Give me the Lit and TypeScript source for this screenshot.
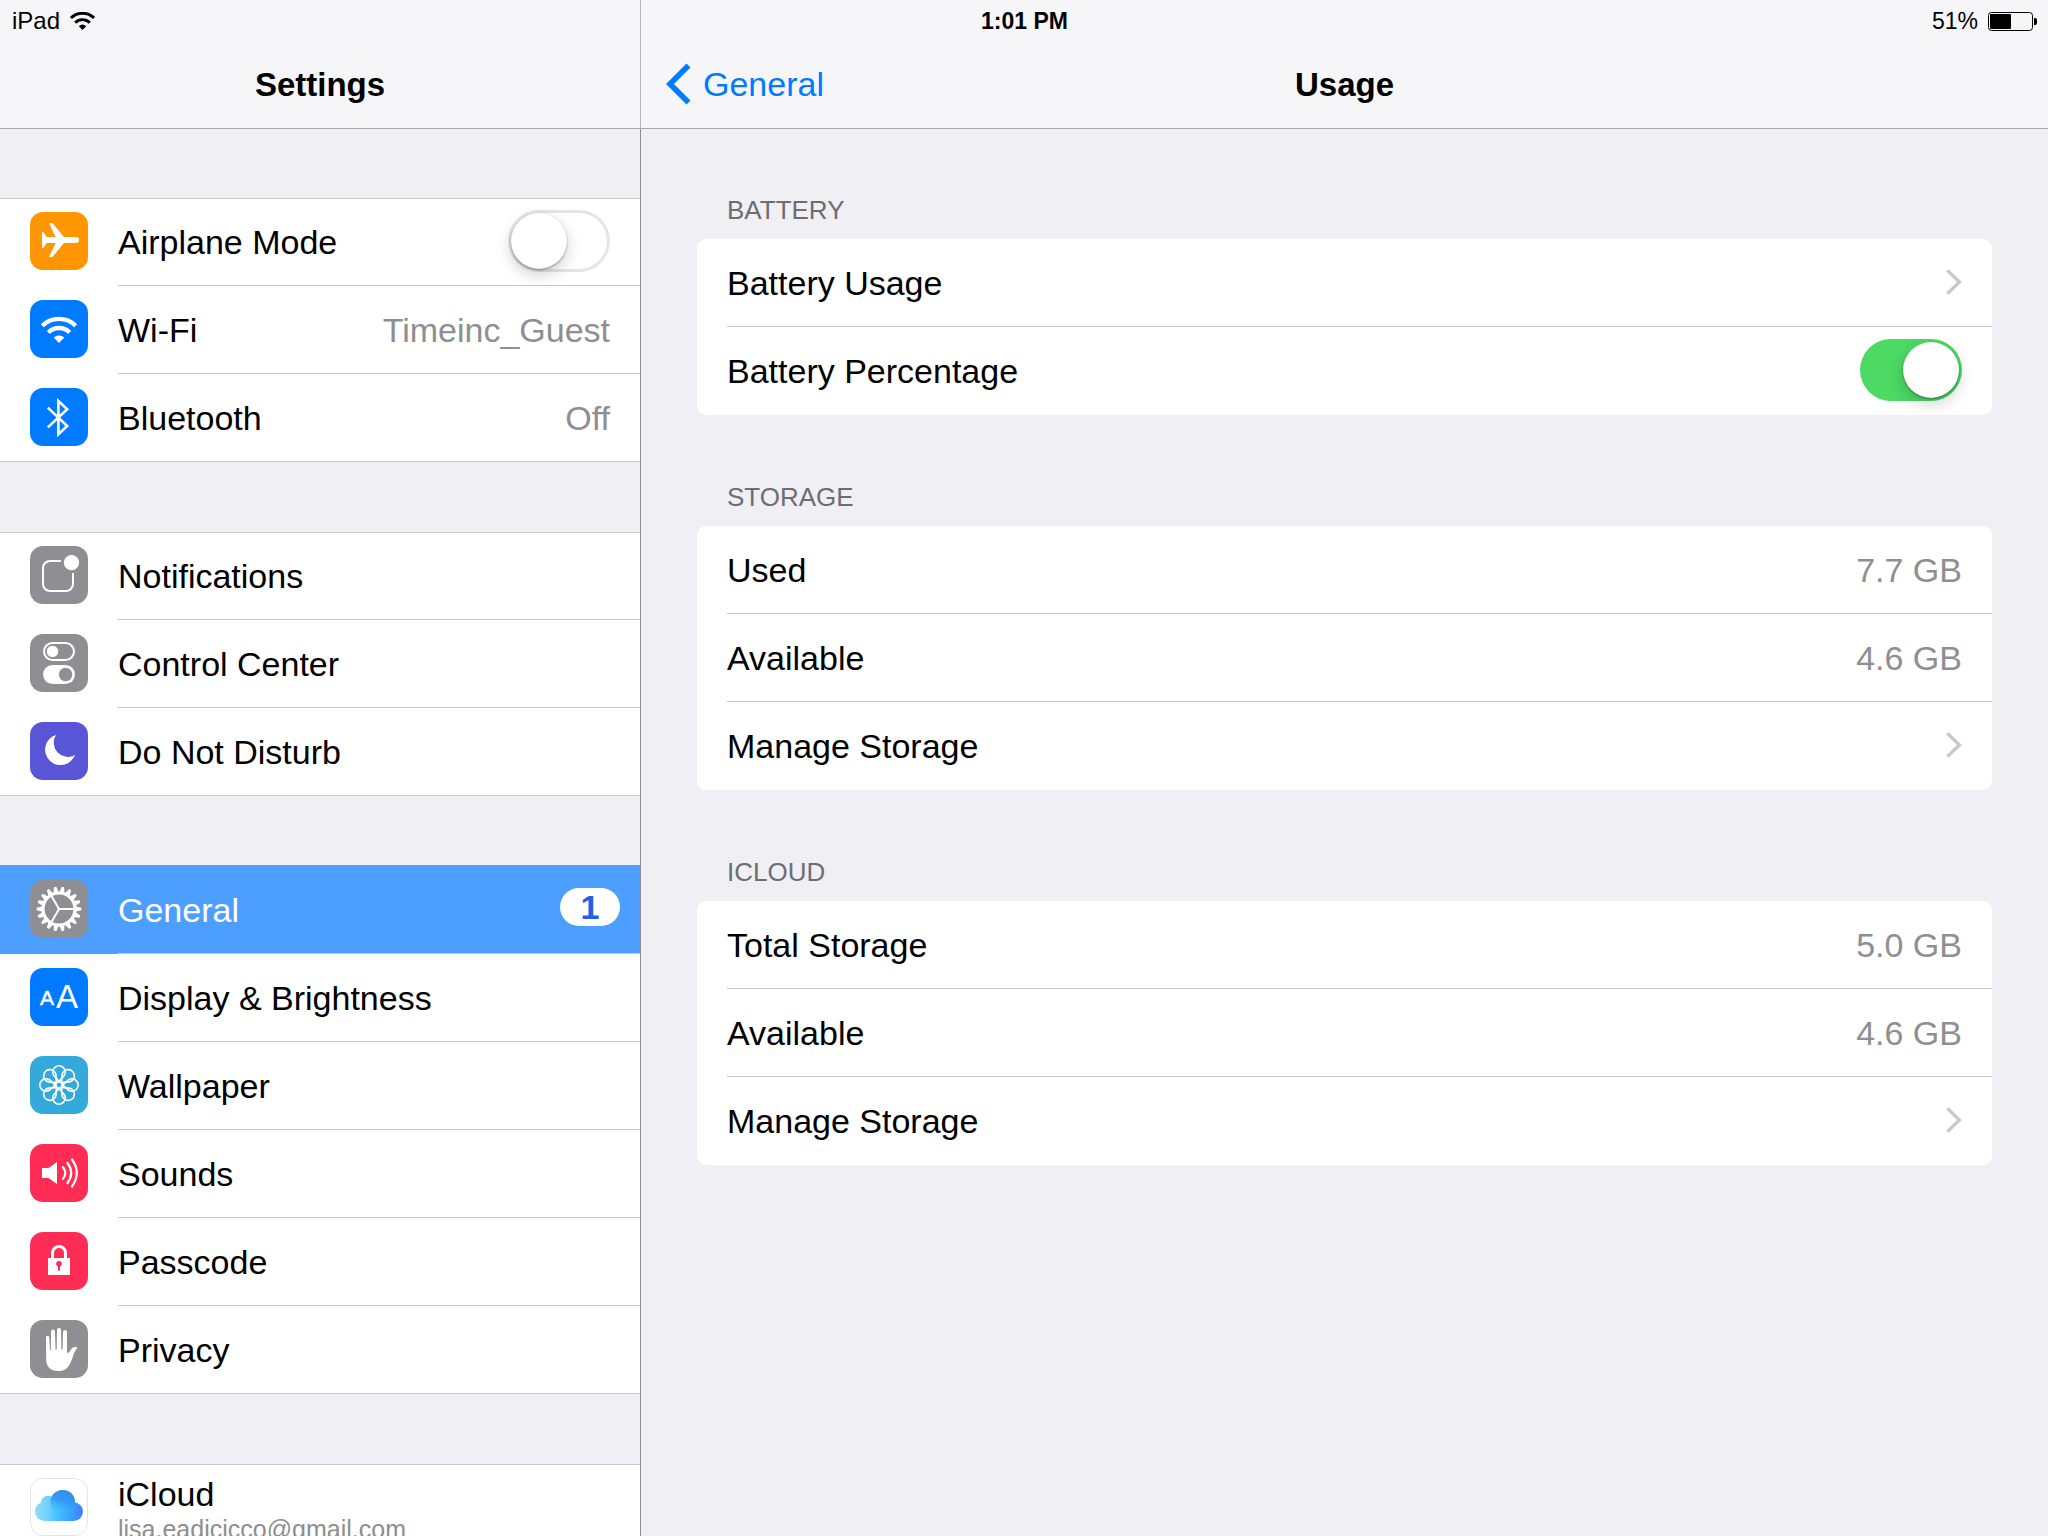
import { LitElement, html, svg, css, nothing } from "lit";
import type { SVGTemplateResult } from "lit";
import { customElement, property } from "lit/decorators.js";
import { classMap } from "lit/directives/class-map.js";

type Row = {
  label: string;
  icon?: string;
  value?: string;
  detail?: string;
  badge?: number;
  toggle?: boolean;
  on?: boolean;
  chevron?: boolean;
  selected?: boolean;
};

const SIDEBAR: Row[][] = [
  [
    { label: "Airplane Mode", icon: "airplane", toggle: true, on: false },
    { label: "Wi-Fi", icon: "wifi", value: "Timeinc_Guest" },
    { label: "Bluetooth", icon: "bluetooth", value: "Off" },
  ],
  [
    { label: "Notifications", icon: "notifications" },
    { label: "Control Center", icon: "control" },
    { label: "Do Not Disturb", icon: "moon" },
  ],
  [
    { label: "General", icon: "gear", badge: 1, selected: true },
    { label: "Display & Brightness", icon: "display" },
    { label: "Wallpaper", icon: "wallpaper" },
    { label: "Sounds", icon: "sounds" },
    { label: "Passcode", icon: "lock" },
    { label: "Privacy", icon: "hand" },
  ],
  [{ label: "iCloud", icon: "icloud", detail: "lisa.eadicicco@gmail.com" }],
];

const SECTIONS: { title: string; rows: Row[] }[] = [
  {
    title: "BATTERY",
    rows: [
      { label: "Battery Usage", chevron: true },
      { label: "Battery Percentage", toggle: true, on: true },
    ],
  },
  {
    title: "STORAGE",
    rows: [
      { label: "Used", value: "7.7 GB" },
      { label: "Available", value: "4.6 GB" },
      { label: "Manage Storage", chevron: true },
    ],
  },
  {
    title: "ICLOUD",
    rows: [
      { label: "Total Storage", value: "5.0 GB" },
      { label: "Available", value: "4.6 GB" },
      { label: "Manage Storage", chevron: true },
    ],
  },
];

const slug = (text: string) => text.toLowerCase().replace(/[^a-z0-9]+/g, "-");

const wifiShape = svg`
  <path d="M12.3 25.7A24 24 0 0 1 45.7 25.7" fill="none" stroke="currentColor" stroke-width="4.3"/>
  <path d="M18.4 32.4A15 15 0 0 1 39.6 32.4" fill="none" stroke="currentColor" stroke-width="4.3"/>
  <path d="M29 43L23.7 37.5A8 8 0 0 1 34.3 37.5Z" fill="currentColor"/>`;

const around = (count: number, shape: (angle: number) => SVGTemplateResult) =>
  Array.from({ length: count }, (_, i) => shape((360 / count) * i));

const ICONS: Record<string, { color: string; art: SVGTemplateResult }> = {
  airplane: {
    color: "#ff9500",
    art: svg`<path fill="#fff" d="M12 20h1.2l3.6 5H25.500L19 11h3.400L34 25h12a3 3 0 0 1 0 6H34L22.400 45H19L25.500 31H16.800l-3.600 5H12z"/>`,
  },
  wifi: { color: "#007aff", art: wifiShape },
  bluetooth: {
    color: "#007aff",
    art: svg`<path fill="none" stroke="#fff" stroke-width="2.6" d="M17.8 19.6L37.2 38L28.4 46.3V12.9L37.2 21.2L17.8 39.4"/>`,
  },
  notifications: {
    color: "#8e8e93",
    art: svg`<path fill="none" stroke="#fff" stroke-width="2" d="M31 15H20a7 7 0 0 0-7 7v16a7 7 0 0 0 7 7h16a7 7 0 0 0 7-7V27"/>
      <circle cx="41.5" cy="16.7" r="7.6" fill="#fff"/>`,
  },
  control: {
    color: "#8e8e93",
    art: svg`<rect x="14" y="9" width="30" height="17" rx="8.5" fill="none" stroke="#fff" stroke-width="2"/>
      <circle cx="22.5" cy="17.4" r="5.7" fill="#fff"/>
      <rect x="13" y="31" width="32" height="19" rx="9.5" fill="#fff"/>
      <circle cx="35.6" cy="40.5" r="6.7" fill="#8e8e93"/>`,
  },
  moon: {
    color: "#5856d6",
    art: svg`<path fill="#fff" d="M26 13A15.4 15.4 0 1 0 45 33A14.2 14.2 0 0 1 26 13z"/>`,
  },
  gear: {
    color: "#8e8e93",
    art: svg`<g transform="translate(29 29)">
      <circle r="16" fill="none" stroke="#fff" stroke-width="3.2"/>
      ${around(18, (a) => svg`<path fill="#fff" transform="rotate(${a})" d="M17 -2.5L22.3 -1.2V1.2L17 2.5z"/>`)}
      ${around(3, (a) => svg`<path stroke="#fff" stroke-width="2" transform="rotate(${a})" d="M0 0H15"/>`)}
    </g>`,
  },
  display: {
    color: "#007aff",
    art: svg`<text x="10" y="37" font-size="21" stroke="#fff" stroke-width="0.5" fill="#fff">A</text>
      <text x="26" y="40" font-size="33" fill="#fff">A</text>`,
  },
  wallpaper: {
    color: "#34aadc",
    art: svg`<g transform="translate(29 29)" fill="none" stroke="#fff" stroke-width="1.7">
      <circle r="3.2"/>
      ${around(8, (a) => svg`<path transform="rotate(${a})" d="M0 -3.5L-5.3 -9.7A6.2 6.2 0 1 1 5.3 -9.7Z"/>`)}
    </g>`,
  },
  sounds: {
    color: "#ff2d55",
    art: svg`<path fill="#fff" d="M12 24h6.5L27 18v22l-8.5-6H12z"/>
      <path fill="none" stroke="#fff" stroke-width="2.2" stroke-linecap="round" d="M33 23.2q4.600 5.800 0 11.600M37.500 19q7.400 10 0 20M42 15.500q9.600 13.500 0 27"/>`,
  },
  lock: {
    color: "#ff2d55",
    art: svg`<path fill="none" stroke="#fff" stroke-width="3" d="M22.5 27V21a6.5 6.5 0 0 1 13 0v6"/>
      <rect x="18" y="26" width="22" height="17" fill="#fff"/>
      <circle cx="29" cy="31.7" r="2.8" fill="#ff2d55"/>
      <rect x="28" y="33" width="2" height="5.6" fill="#ff2d55"/>`,
  },
  hand: {
    color: "#8e8e93",
    art: svg`<path fill="#fff" d="M16 17.5a1.6 1.6 0 0 1 3.3 0L20 30h.9L21 11.5a2 2 0 0 1 4 0L25.5 29.5h1.2L27 10a2 2 0 0 1 4 0l.4 19.5h1.2L33 12a2 2 0 0 1 4 0V31c0 2.5 1 2.8 2.2 1l2.600-3.500c1-1.500 3-2 5-1.300c.4.200.5.600.2 1l-2.500 4c-1.500 3-2.500 8-5 12.500C37 49 33.5 51 28.5 51C20 51 16.2 46.5 16.2 39z"/>`,
  },
  icloud: {
    color: "#ffffff",
    art: svg`<defs>
        <linearGradient id="cloud-base" gradientUnits="userSpaceOnUse" x1="5" x2="53" y1="36" y2="36">
          <stop offset="0" stop-color="#90dbf6"/><stop offset="0.25" stop-color="#74d2f8"/>
          <stop offset="0.45" stop-color="#45c2ff"/><stop offset="0.75" stop-color="#38a2fa"/>
          <stop offset="1" stop-color="#3f7df5"/>
        </linearGradient>
        <linearGradient id="cloud-top" x1="0.6" x2="0.35" y1="0" y2="1">
          <stop offset="0" stop-color="#338cee"/><stop offset="0.45" stop-color="#3397f3" stop-opacity="0.9"/>
          <stop offset="1" stop-color="#45c2ff" stop-opacity="0"/>
        </linearGradient>
      </defs>
      <rect x="0.5" y="0.5" width="57" height="57" rx="12.5" fill="#fff" stroke="#e4e4e6"/>
      <g fill="url(#cloud-base)">
        <circle cx="18" cy="25.2" r="7.4"/>
        <circle cx="14.6" cy="33.4" r="9.6"/>
        <circle cx="43.6" cy="33.6" r="9.4"/>
        <rect x="14.600" y="28" width="29" height="15"/>
        <circle cx="32.700" cy="24.300" r="12.300"/>
      </g>
      <circle cx="32.7" cy="24.3" r="12.3" fill="url(#cloud-top)"/>`,
  },
};

@customElement("settings-row")
class SettingsRow extends LitElement {
  @property({ attribute: false }) row!: Row;
  @property({ type: Boolean }) last = false;

  static styles = css`
    :host {
      display: block;
    }
    .row {
      display: flex;
      align-items: center;
      height: 88px;
      padding-left: 30px;
      color: #000;
      text-decoration: none;
      box-sizing: border-box;
    }
    .icon {
      flex: none;
      width: 58px;
      height: 58px;
      margin: 0 30px 2px 0;
      border-radius: 13px;
      overflow: hidden;
      color: #fff;
    }
    .body {
      flex: 1;
      display: flex;
      align-items: center;
      height: 88px;
      padding-right: 30px;
      box-sizing: border-box;
      box-shadow: inset 0 -1px #c8c7cc;
      min-width: 0;
    }
    .last .body {
      box-shadow: none;
    }
    .names {
      flex: 1;
      display: flex;
      flex-direction: column;
    }
    .names:has(.detail) {
      padding-top: 4px;
    }
    .label {
      line-height: 38px;
    }
    .detail {
      font-size: 25px;
      line-height: 32px;
      color: #8e8e8e;
    }
    .value {
      color: #8e8e93;
    }
    .selected {
      background: #4c9eff;
      box-shadow: 0 -1px #4c9eff;
      color: #fff;
    }
    .selected .body {
      padding-right: 20px;
    }
    .badge {
      width: 60px;
      margin-bottom: 6px;
      border-radius: 20px;
      background: #fff;
      color: #225ee8;
      font-weight: bold;
      line-height: 38px;
      text-align: center;
    }
    .chevron {
      width: 16px;
      height: 26px;
      margin-bottom: 2px;
    }
    .toggle {
      appearance: none;
      display: flex;
      width: 102px;
      height: 62px;
      margin: 0 0 2px;
      padding: 3px;
      box-sizing: border-box;
      border-radius: 31px;
      background: #fff;
      box-shadow: inset 0 0 0 3px #e5e5e5;
      cursor: pointer;
    }
    .toggle::before {
      content: "";
      width: 56px;
      height: 56px;
      border-radius: 50%;
      background: #fff;
      box-shadow: 0 1px 2px rgba(0, 0, 0, 0.4), 0 6px 16px rgba(0, 0, 0, 0.18);
    }
    .toggle:checked {
      justify-content: flex-end;
      background: #4cd964;
      box-shadow: none;
    }
  `;

  private renderBody(id: string) {
    const r = this.row;
    const icon = r.icon ? ICONS[r.icon] : undefined;
    return html`
      ${icon
        ? html`<svg class="icon" viewBox="0 0 58 58" style="background:${icon.color}" aria-hidden="true">${icon.art}</svg>`
        : nothing}
      <span class="body">
        <span class="names">
          ${r.toggle
            ? html`<label class="label" for=${id}>${r.label}</label>`
            : html`<span class="label">${r.label}</span>`}
          ${r.detail ? html`<span class="detail">${r.detail}</span>` : nothing}
        </span>
        ${r.value ? html`<span class="value">${r.value}</span>` : nothing}
        ${r.badge ? html`<span class="badge">${r.badge}</span>` : nothing}
        ${r.toggle ? html`<input class="toggle" type="checkbox" role="switch" id=${id} .checked=${!!r.on} />` : nothing}
        ${r.chevron
          ? html`<svg class="chevron" viewBox="0 0 16 26" aria-hidden="true">
              <path d="M1.4 1.4L13.4 13L1.4 24.6" fill="none" stroke="#c7c7cc" stroke-width="3.4" />
            </svg>`
          : nothing}
      </span>
    `;
  }

  render() {
    const r = this.row;
    const id = slug(r.label);
    const classes = classMap({ row: true, selected: !!r.selected, last: this.last });
    const link = !r.toggle && (r.icon || r.chevron);
    return link
      ? html`<a class=${classes} href="#${id}" aria-current=${r.selected ? "page" : nothing}>${this.renderBody(id)}</a>`
      : html`<div class=${classes}>${this.renderBody(id)}</div>`;
  }
}

@customElement("app-root")
class AppRoot extends LitElement {
  static styles = css`
    :host {
      display: block;
      font-family: "Liberation Sans", Arial, sans-serif;
      font-size: 34px;
      color: #000;
    }
    .app {
      display: grid;
      grid-template-columns: 5fr 11fr;
      grid-template-rows: 40px minmax(0, 1fr);
      height: 100vh;
      background: #efeff4;
    }
    .status {
      grid-area: 1 / 1 / 2 / 3;
      z-index: 1;
      display: grid;
      grid-template-columns: 1fr auto 1fr;
      align-items: center;
      padding: 2px 11px 0 12px;
      font-size: 24px;
      line-height: 38px;
    }
    .carrier,
    .power {
      display: flex;
      align-items: center;
      gap: 10px;
    }
    .power {
      justify-content: flex-end;
    }
    .time,
    .power {
      font-size: 23px;
    }
    .time {
      font-weight: bold;
    }
    .wifi {
      width: 25px;
      height: 18px;
    }
    .battery {
      width: 49px;
      height: 19px;
    }
    .pane {
      grid-row: 1 / 3;
      display: flex;
      flex-direction: column;
      min-width: 0;
      min-height: 0;
    }
    .side {
      grid-column: 1;
    }
    .main {
      grid-column: 2;
    }
    .bar {
      flex: none;
      display: grid;
      grid-template-columns: 1fr auto 1fr;
      align-items: center;
      height: 88px;
      padding-top: 40px;
      background: #f6f6f8;
      border-bottom: 1px solid #a6a6ab;
    }
    .main .bar {
      border-left: 1px solid #b8b8bc;
    }
    .title {
      grid-column: 2;
      margin: 0;
      padding-top: 2px;
      font-size: 33px;
      line-height: 86px;
      font-weight: bold;
    }
    .back {
      display: flex;
      align-items: center;
      gap: 12px;
      padding-left: 25px;
      color: #007aff;
      text-decoration: none;
    }
    .arrow {
      width: 25px;
      height: 42px;
    }
    .scroll {
      flex: 1;
      min-height: 0;
      overflow-y: auto;
      scrollbar-width: none;
    }
    .menu {
      display: flex;
      flex-direction: column;
      gap: 70px;
      padding-top: 69px;
      box-sizing: border-box;
    }
    .group {
      flex: none;
      background: #fff;
      box-shadow: inset 0 1px #c8c7cc, inset 0 -1px #c8c7cc;
    }
    .content {
      display: flex;
      flex-direction: column;
      gap: 67px;
      padding: 66px 56px;
      border-left: 1px solid #8e8e93;
    }
    .heading {
      margin: 0;
      padding: 0 30px 14px;
      font-size: 26px;
      line-height: 30px;
      font-weight: normal;
      color: #6d6d72;
    }
    .card {
      border-radius: 9px;
      background: #fff;
    }
  `;

  render() {
    return html`
      <div class="app">
        <div class="status">
          <span class="carrier">
            iPad
            <svg class="wifi" viewBox="11 17 36 26" aria-hidden="true">${wifiShape}</svg>
          </span>
          <span class="time">1:01 PM</span>
          <span class="power">
            51%
            <svg class="battery" viewBox="0 0 49 19" aria-hidden="true">
              <rect x="0.5" y="0.5" width="44" height="18" rx="3" fill="none" stroke="#000" />
              <rect x="2" y="2" width="21" height="15" rx="1" />
              <path d="M46 6h1a2 2 0 0 1 2 2v3a2 2 0 0 1-2 2h-1z" />
            </svg>
          </span>
        </div>
        <aside class="pane side">
          <header class="bar"><h1 class="title">Settings</h1></header>
          <nav class="scroll menu" aria-label="Settings">
            ${SIDEBAR.map(
              (rows) => html`<div class="group">
                ${rows.map((row, i) => html`<settings-row .row=${row} ?last=${i === rows.length - 1}></settings-row>`)}
              </div>`,
            )}
          </nav>
        </aside>
        <main class="pane main">
          <header class="bar">
            <a class="back" href="#general">
              <svg class="arrow" viewBox="0 0 25 42" aria-hidden="true">
                <path d="M22.5 2.5L4 21L22.5 39.5" fill="none" stroke="currentColor" stroke-width="5.6" />
              </svg>
              General
            </a>
            <h2 class="title">Usage</h2>
          </header>
          <div class="scroll content">
            ${SECTIONS.map(
              (s) => html`<section>
                <h3 class="heading">${s.title}</h3>
                <div class="card">
                  ${s.rows.map((row, i) => html`<settings-row .row=${row} ?last=${i === s.rows.length - 1}></settings-row>`)}
                </div>
              </section>`,
            )}
          </div>
        </main>
      </div>
    `;
  }
}
